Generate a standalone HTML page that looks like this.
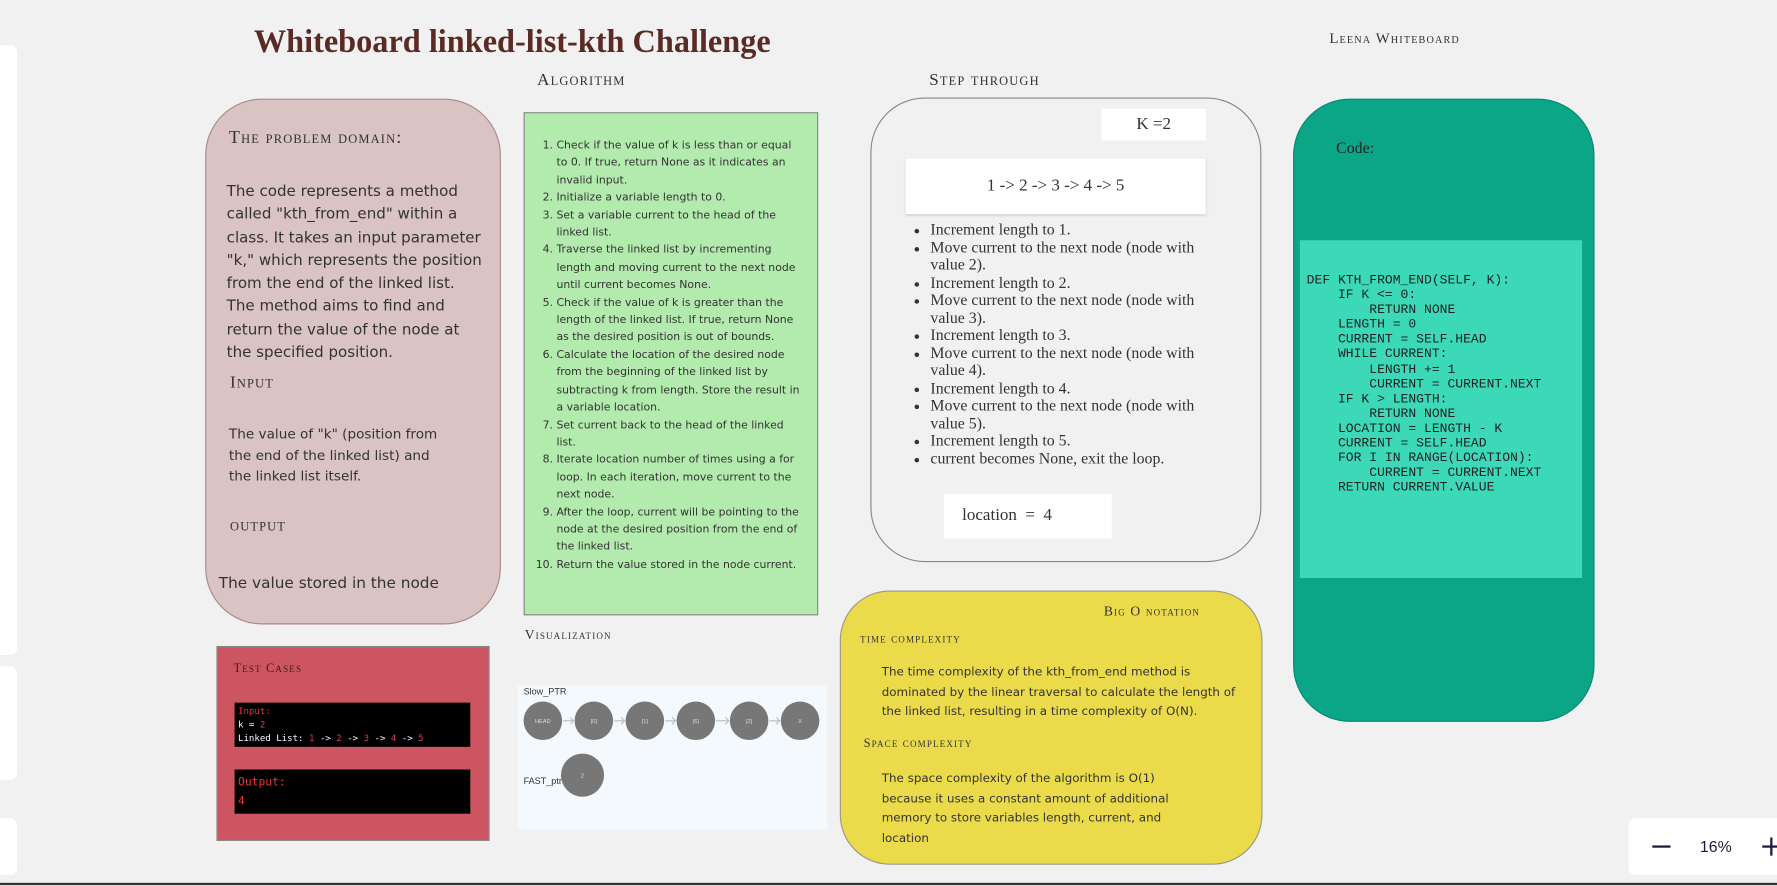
<!DOCTYPE html>
<html><head><meta charset="utf-8"><style>
body{margin:0;width:1777px;height:886px;background:#f1f1f1;overflow:hidden;font-family:"Liberation Sans",sans-serif;}
#w{position:absolute;left:0;top:0;width:1568px;height:782px;transform:scale(1.13329);transform-origin:0 0}
.a{position:absolute}
.sc{font-family:"Liberation Serif",serif;font-variant:small-caps;letter-spacing:1px;color:#333}
.op{font-family:"DejaVu Sans","Liberation Sans",sans-serif;}
ol{margin:0;padding-left:22px}
ul{margin:0;padding-left:18px}
</style></head><body><div id="w">
<div class="a" style="left:0;top:40px;width:15px;height:538px;background:#fff;border-radius:0 6px 6px 0"></div>
<div class="a" style="left:0;top:588px;width:15px;height:100px;background:#fff;border-radius:0 6px 6px 0"></div>
<div class="a" style="left:0;top:722px;width:15px;height:50px;background:#fff;border-radius:0 6px 6px 0"></div>
<div class="a" style="left:0;top:779px;width:1568px;height:2px;background:#333"></div>

<div class="a" style="left:224px;top:22px;font-family:'Liberation Serif',serif;font-weight:bold;font-size:28.5px;color:#5c2a24">Whiteboard linked-list-kth Challenge</div>
<div class="a sc" style="left:1173px;top:26px;font-size:13px">Leena Whiteboard</div>
<div class="a sc" style="left:474px;top:63px;font-size:15px">Algorithm</div>
<div class="a sc" style="left:820px;top:63px;font-size:15px">Step through</div>

<div class="a" style="left:181px;top:87px;width:259px;height:462px;background:#d9c3c3;border:1px solid #a88;border-radius:50px;"></div>
<div class="a sc" style="left:202px;top:113px;font-size:16px">The problem domain:</div>
<div class="a op" style="left:200px;top:160px;width:228px;font-size:13.3px;line-height:20.3px;color:#333">The code represents a method called "kth_from_end" within a class. It takes an input parameter "k," which represents the position from the end of the linked list. The method aims to find and return the value of the node at the specified position.</div>
<div class="a sc" style="left:203px;top:330px;font-size:15px">Input</div>
<div class="a op" style="left:202px;top:374px;width:190px;font-size:12px;line-height:18.5px;color:#333">The value of "k" (position from the end of the linked list) and the linked list itself.</div>
<div class="a sc" style="left:203px;top:456px;font-size:15px">output</div>
<div class="a op" style="left:193px;top:507px;font-size:13.5px;color:#333">The value stored in the node</div>

<div class="a op" style="left:462px;top:99px;width:260px;height:444px;background:#b3eaae;border:1px solid #888;font-size:9.6px;line-height:15.4px;color:#333;box-sizing:border-box;padding:21px 14px 0 6px">
<ol>
<li>Check if the value of k is less than or equal to 0. If true, return None as it indicates an invalid input.</li>
<li>Initialize a variable length to 0.</li>
<li>Set a variable current to the head of the linked list.</li>
<li>Traverse the linked list by incrementing length and moving current to the next node until current becomes None.</li>
<li>Check if the value of k is greater than the length of the linked list. If true, return None as the desired position is out of bounds.</li>
<li>Calculate the location of the desired node from the beginning of the linked list by subtracting k from length. Store the result in a variable location.</li>
<li>Set current back to the head of the linked list.</li>
<li>Iterate location number of times using a for loop. In each iteration, move current to the next node.</li>
<li>After the loop, current will be pointing to the node at the desired position from the end of the linked list.</li>
<li>Return the value stored in the node current.</li>
</ol></div>

<div class="a" style="left:768px;top:86px;width:343px;height:408px;background:#f1f1f1;border:1px solid #888;border-radius:48px"></div>
<div class="a" style="left:972px;top:96px;width:92px;height:28px;background:#fff;font-family:'Liberation Serif',serif;font-size:15px;line-height:28px;text-align:center;color:#333">K =2</div>
<div class="a" style="left:799px;top:140px;width:265px;height:49px;background:#fff;box-shadow:0 1px 2px #ccc;font-family:'Liberation Serif',serif;font-size:15px;line-height:49px;text-align:center;color:#333">1 -&gt; 2 -&gt; 3 -&gt; 4 -&gt; 5</div>
<div class="a" style="left:803px;top:196px;width:280px;font-family:'Liberation Serif',serif;font-size:14px;line-height:15.5px;color:#333"><ul>
<li>Increment length to 1.</li><li>Move current to the next node (node with value 2).</li><li>Increment length to 2.</li><li>Move current to the next node (node with value 3).</li><li>Increment length to 3.</li><li>Move current to the next node (node with value 4).</li><li>Increment length to 4.</li><li>Move current to the next node (node with value 5).</li><li>Increment length to 5.</li><li>current becomes None, exit the loop.</li></ul></div>
<div class="a" style="left:833px;top:436px;width:148px;height:39px;background:#fff;font-family:'Liberation Serif',serif;font-size:15px;line-height:39px;color:#333;box-sizing:border-box;padding-left:16px">location &nbsp;= &nbsp;4</div>

<div class="a" style="left:1141px;top:87px;width:264px;height:548px;background:#0ba686;border:1px solid #087;border-radius:50px"></div>
<div class="a" style="left:1179px;top:124px;font-family:'Liberation Serif',serif;font-size:14px;color:#222">Code:</div>
<div class="a" style="left:1147px;top:212px;width:249px;height:298px;background:#3bd9b8"></div>
<pre class="a" style="left:1153px;top:241px;margin:0;font-family:'Liberation Mono',monospace;font-size:11.5px;line-height:13.1px;color:#222">DEF KTH_FROM_END(SELF, K):
    IF K &lt;= 0:
        RETURN NONE
    LENGTH = 0
    CURRENT = SELF.HEAD
    WHILE CURRENT:
        LENGTH += 1
        CURRENT = CURRENT.NEXT
    IF K &gt; LENGTH:
        RETURN NONE
    LOCATION = LENGTH - K
    CURRENT = SELF.HEAD
    FOR I IN RANGE(LOCATION):
        CURRENT = CURRENT.NEXT
    RETURN CURRENT.VALUE</pre>

<div class="a" style="left:191px;top:570px;width:239px;height:170px;background:#cd5562;border:1px solid #888"></div>
<div class="a sc" style="left:206px;top:584px;font-size:11px;color:#3a1a1a">Test Cases</div>
<div class="a" style="left:207px;top:620px;width:208px;height:39px;background:#000;font-family:'DejaVu Sans Mono',monospace;font-size:8px;line-height:12px;color:#fff;padding:2px 3px;box-sizing:border-box"><span style="color:#e33">Input:</span><br>k = <span style="color:#e2336b">2</span><br>Linked List: <span style="color:#e2336b">1</span> -&gt; <span style="color:#e2336b">2</span> -&gt; <span style="color:#e2336b">3</span> -&gt; <span style="color:#e2336b">4</span> -&gt; <span style="color:#e2336b">5</span></div>
<div class="a" style="left:207px;top:679px;width:208px;height:39px;background:#000;font-family:'DejaVu Sans Mono',monospace;font-size:10px;line-height:17px;color:#e33;padding:3px 3px;box-sizing:border-box">Output:<br>4</div>

<div class="a sc" style="left:463px;top:553px;font-size:12px">Visualization</div>
<div class="a" style="left:457px;top:605px;width:273px;height:127px;background:#f4f9fd"></div>
<div class="a" style="left:462px;top:606px;font-size:8px;color:#333">Slow_PTR</div>
<div class="a" style="left:462px;top:685px;font-size:8px;color:#333">FAST_ptr</div>
<svg class="a" style="left:457px;top:618px" width="273" height="90">
<g fill="#777"><circle cx="22" cy="18" r="17"/><circle cx="67" cy="18" r="17"/><circle cx="112" cy="18" r="17"/><circle cx="157" cy="18" r="17"/><circle cx="204" cy="18" r="17"/><circle cx="249" cy="18" r="17"/><circle cx="57" cy="66" r="19"/></g>
<g stroke="#bbb" fill="none"><path d="M40 18h9m-3-3l3 3-3 3M85 18h9m-3-3l3 3-3 3M130 18h9m-3-3l3 3-3 3M175 18h11m-3-3l3 3-3 3M222 18h9m-3-3l3 3-3 3"/></g>
<g fill="#ddd" font-size="5" text-anchor="middle" font-family="Liberation Sans"><text x="22" y="20">HEAD</text><text x="67" y="20">[0]</text><text x="112" y="20">[1]</text><text x="157" y="20">[6]</text><text x="204" y="20">[2]</text><text x="249" y="20">X</text><text x="57" y="68">2</text></g>
</svg>

<div class="a" style="left:741px;top:521px;width:371px;height:240px;background:#ebdb4a;border:1px solid #998;border-radius:44px"></div>
<div class="a sc" style="left:974px;top:532px;font-size:12px">Big O notation</div>
<div class="a sc" style="left:759px;top:558px;font-size:11px">time complexity</div>
<div class="a op" style="left:778px;top:585px;width:316px;font-size:10.5px;line-height:17.5px;color:#333">The time complexity of the kth_from_end method is dominated by the linear traversal to calculate the length of the linked list, resulting in a time complexity of O(N).</div>
<div class="a sc" style="left:762px;top:650px;font-size:11px">Space complexity</div>
<div class="a op" style="left:778px;top:679px;width:300px;font-size:10.5px;line-height:17.5px;color:#333">The space complexity of the algorithm is O(1)<br>because it uses a constant amount of additional<br>memory to store variables length, current, and<br>location</div>

<div class="a" style="left:1437px;top:722px;width:150px;height:50px;background:#fff;border-radius:6px"></div>
<div class="a" style="left:1458px;top:746px;width:16px;height:2px;background:#1a1a3a"></div>
<div class="a" style="left:1500px;top:739px;font-size:14px;color:#1a1a3a">16%</div>
<div class="a" style="left:1555px;top:746px;width:16px;height:2px;background:#1a1a3a"></div>
<div class="a" style="left:1562px;top:739px;width:2px;height:16px;background:#1a1a3a"></div>
</div></body></html>
